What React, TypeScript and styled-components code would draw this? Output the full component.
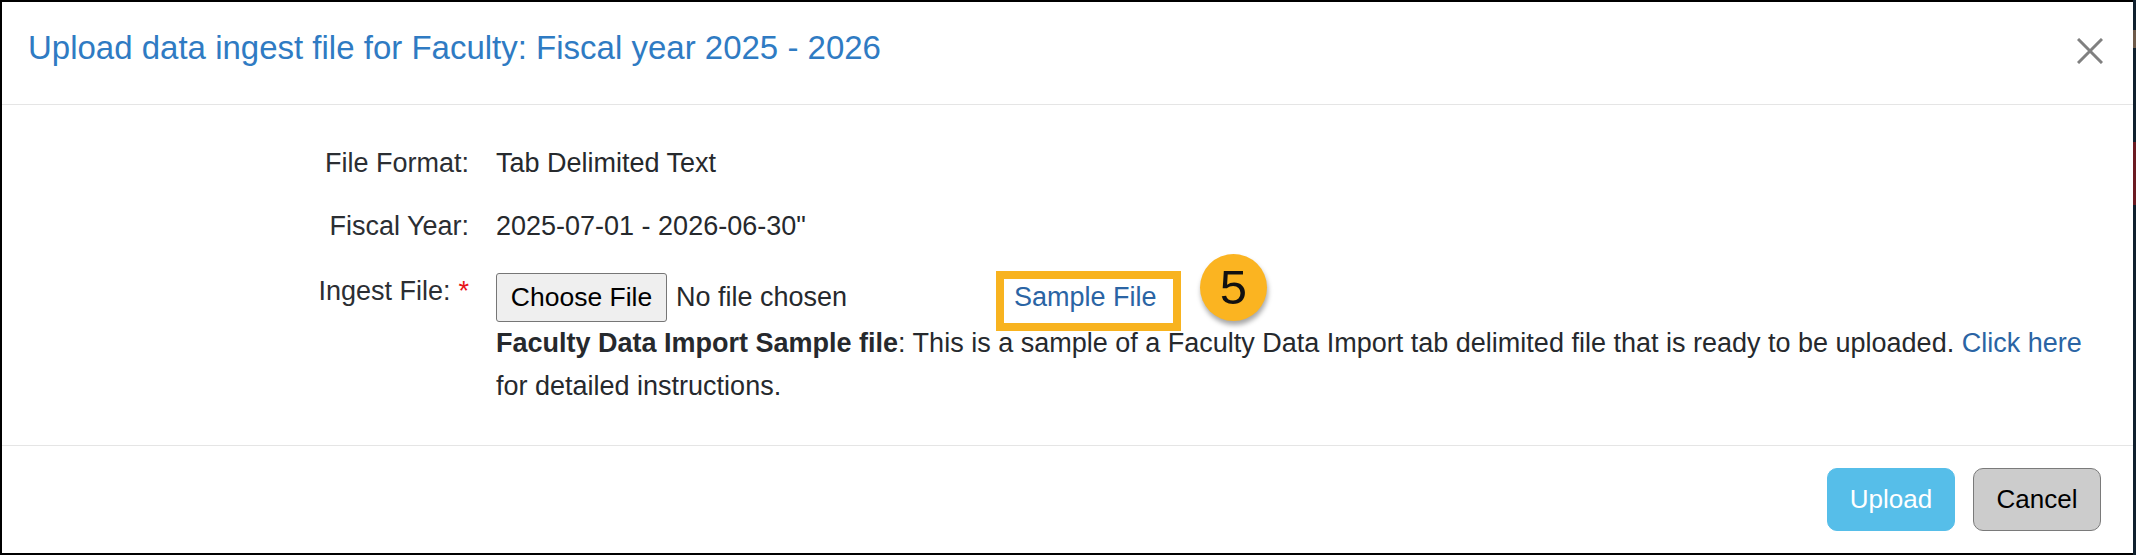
import React from "react"
import styled, { createGlobalStyle } from "styled-components"

const GlobalStyle = createGlobalStyle`
  html, body {
    margin: 0;
    padding: 0;
  }
  body {
    width: 2136px;
    height: 555px;
    overflow: hidden;
    font-family: "Liberation Sans", Arial, Helvetica, sans-serif;
    background: linear-gradient(
      to bottom,
      #10202e 0 30px,
      #6d5a4a 30px 48px,
      #10202e 48px 142px,
      #6b1a22 142px 205px,
      #10202e 205px
    );
  }
`

const Modal = styled.div`
  width: 2133px;
  height: 555px;
  box-sizing: border-box;
  display: flex;
  flex-direction: column;
  background: #fff;
  border-top: 2px solid #000;
  border-left: 2px solid #000;
  border-bottom: 2px solid #000;
  color: #26292d;
`

const Header = styled.div`
  height: 103px;
  box-sizing: border-box;
  display: flex;
  align-items: center;
  justify-content: space-between;
  padding: 0 30px 9px 26px;
  border-bottom: 1px solid #e5e5e5;
`

const Title = styled.h4`
  margin: 0;
  font-size: 33px;
  font-weight: normal;
  line-height: 1.1;
  color: #2f7bc3;
`

const CloseButton = styled.button`
  display: flex;
  width: 26px;
  height: 26px;
  padding: 0;
  margin-top: 5px;
  border: 0;
  background: none;
`

const Body = styled.div`
  flex: 1;
  padding-top: 39px;
  font-size: 27px;
`

const Row = styled.div<{ $gap?: number }>`
  display: grid;
  grid-template-columns: 467px 1fr;
  column-gap: 27px;
  margin-bottom: ${p => p.$gap ?? 25}px;
  line-height: 38px;
`

const Label = styled.div`
  text-align: right;
  color: #2b2e33;
`

const Required = styled.span`
  color: #e8141b;
  margin-left: 8px;
`

const Value = styled.div`
  padding-right: 30px;
`

const FileLine = styled.div`
  display: flex;
  align-items: center;
  height: 50px;
`

const FilePicker = styled.div`
  display: flex;
  align-items: center;
  width: 518px;
`

const ChooseButton = styled.button`
  width: 171px;
  height: 49px;
  padding: 0;
  margin-right: 9px;
  font-family: inherit;
  font-size: 26.5px;
  color: #000;
  background: #efefef;
  border: 1px solid #767676;
  border-radius: 3px;
`

const Link = styled.a`
  color: #2a64a4;
  text-decoration: none;
`

const SampleLink = styled(Link)`
  position: relative;
  display: inline-block;
  line-height: 38px;
`

const Highlight = styled.span`
  position: absolute;
  left: -18px;
  top: -7px;
  width: 185px;
  height: 60px;
  box-sizing: border-box;
  border: 8px solid #f8b31f;
  pointer-events: none;
`

const StepBadge = styled.span`
  position: absolute;
  left: 186px;
  top: -24px;
  width: 67px;
  height: 67px;
  border-radius: 50%;
  background: #fbb421;
  box-shadow: 1px 4px 5px rgba(0, 0, 0, 0.35);
  display: flex;
  align-items: center;
  justify-content: center;
  font-size: 49px;
  line-height: 1;
  color: #111;
`

const Description = styled.div`
  line-height: 43px;
`

const Footer = styled.div`
  height: 108px;
  box-sizing: border-box;
  display: flex;
  justify-content: flex-end;
  align-items: flex-start;
  gap: 18px;
  padding: 22px 32px 0 0;
  border-top: 1px solid #e5e5e5;
`

const FooterButton = styled.button<{ $primary?: boolean }>`
  width: 128px;
  height: 63px;
  font-family: inherit;
  font-size: 26px;
  border-radius: 10px;
  color: ${p => (p.$primary ? "#fff" : "#000")};
  background: ${p => (p.$primary ? "#56bee9" : "#cccccc")};
  border: 1px solid ${p => (p.$primary ? "#56bee9" : "#7a7a7a")};
`

const CloseIcon = () => (
  <svg width="26" height="26" viewBox="0 0 26 26">
    <path d="M1 1 L25 25 M25 1 L1 25" stroke="#808080" strokeWidth="3" />
  </svg>
)

export default function App() {
  return (
    <>
      <GlobalStyle />
      <Modal>
        <Header>
          <Title>Upload data ingest file for Faculty: Fiscal year 2025 - 2026</Title>
          <CloseButton aria-label="Close">
            <CloseIcon />
          </CloseButton>
        </Header>
        <Body>
          <Row $gap={25}>
            <Label>File Format:</Label>
            <Value>Tab Delimited Text</Value>
          </Row>
          <Row $gap={27}>
            <Label>Fiscal Year:</Label>
            <Value>2025-07-01 - 2026-06-30"</Value>
          </Row>
          <Row $gap={0}>
            <Label>
              Ingest File:<Required>*</Required>
            </Label>
            <Value>
              <FileLine>
                <FilePicker>
                  <ChooseButton>Choose File</ChooseButton>
                  <span>No file chosen</span>
                </FilePicker>
                <SampleLink href="#">
                  Sample File
                  <Highlight />
                  <StepBadge>5</StepBadge>
                </SampleLink>
              </FileLine>
              <Description>
                <strong>Faculty Data Import Sample file</strong>: This is a sample of a
                Faculty Data Import tab delimited file that is ready to be uploaded.{" "}
                <Link href="#">Click here</Link> for detailed instructions.
              </Description>
            </Value>
          </Row>
        </Body>
        <Footer>
          <FooterButton $primary>Upload</FooterButton>
          <FooterButton>Cancel</FooterButton>
        </Footer>
      </Modal>
    </>
  )
}
